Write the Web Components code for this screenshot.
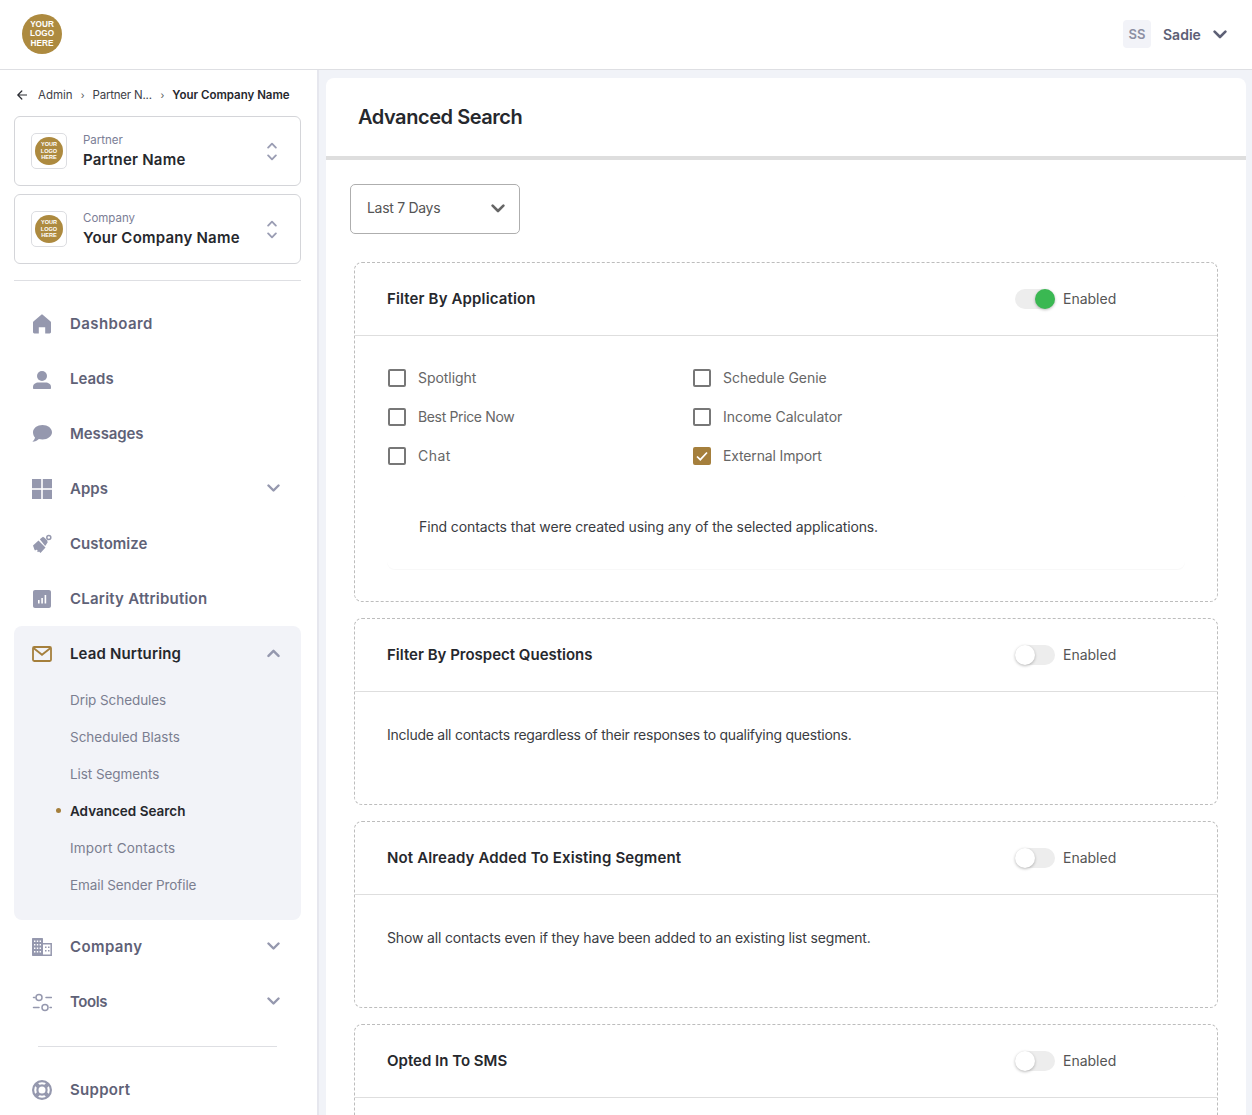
<!DOCTYPE html>
<html>
<head>
<meta charset="utf-8">
<title>Advanced Search</title>
<style>
  html, body { margin: 0; height: 100%; overflow: hidden; }
  body { font-family: Inter, "Liberation Sans", sans-serif; color: #26282d; }
  app-shell { height: 1115px; }
</style>
</head>
<body>
<app-shell>
  <top-bar slot="top"></top-bar>
  <side-nav slot="side"></side-nav>
  <search-page slot="main"></search-page>
</app-shell>

<script>
(function() {
  const CHEVRON_DOWN = '<svg width="14" height="9" viewBox="0 0 14 9" fill="none"><path d="M1.6 1.6 7 7l5.4-5.4" stroke="currentColor" stroke-width="2.6" stroke-linecap="round" stroke-linejoin="round"/></svg>';
  const CHEVRON_UP = '<svg width="14" height="9" viewBox="0 0 14 9" fill="none"><path d="M1.6 7.4 7 2l5.4 5.4" stroke="currentColor" stroke-width="2.6" stroke-linecap="round" stroke-linejoin="round"/></svg>';

  const ICONS = {
    home: '<path d="M10 .6c.4 0 .7.1 1 .4l7.6 6.4c.3.3.4.6.4 1V18c0 .8-.6 1.4-1.4 1.4h-4.4v-6.2H6.8v6.2H2.4C1.6 19.4 1 18.8 1 18V8.4c0-.4.1-.7.4-1L9 1c.3-.3.6-.4 1-.4z" fill="currentColor"/>',
    person: '<circle cx="10" cy="7" r="5" fill="currentColor"/><path d="M1 18c0-2.800 2.600-4.500 5.500-4.500h7c2.900 0 5.500 1.700 5.500 4.500v1c0 .6-.4 1-1 1H2c-.6 0-1-.4-1-1z" fill="currentColor"/>',
    chat: '<path d="M10.500 1C15.700 1 20 4.200 20 8.200s-4.300 7.200-9.500 7.200c-1.300 0-2.500-.2-3.600-.5C5.400 16.500 3 17.500.4 17.700c1.300-1.100 2.300-2.500 2.600-4.200C1.800 12.200 1 10.300 1 8.200 1 4.200 5.300 1 10.500 1z" fill="currentColor"/>',
    apps: '<rect width="9.200" height="9.200" fill="currentColor"/><rect x="10.800" width="9.200" height="9.200" fill="currentColor"/><rect y="10.800" width="9.200" height="9.200" fill="currentColor"/><rect x="10.800" y="10.800" width="9.200" height="9.200" fill="currentColor"/>',
    brush: '<path d="M1 11.500 6.500 6.500l7 7-5 5.500-1.500-1.500-1 .8-.8-1 .4-1.300-1.200-.3-1.400.7-.6-1z" fill="currentColor"/><path d="M7.800 5.200 11 2.800l1.800 1.200 2.200 2.200.7 2-2.500 3.800z" fill="currentColor"/><circle cx="16.800" cy="3.400" r="2" fill="none" stroke="currentColor" stroke-width="1.500"/>',
    chart: '<path d="M3 1h14c1.100 0 2 .9 2 2v14c0 1.100-.9 2-2 2H3c-1.100 0-2-.9-2-2V3c0-1.100.9-2 2-2z" fill="currentColor"/><path d="M6 11h1.600v3.600H6zM9.300 9h1.600v5.600H9.300zM12.600 6h1.600v8.600h-1.600z" fill="#fff"/>',
    mail: '<rect x="1" y="3" width="18" height="14" rx="1.200" fill="none" stroke="currentColor" stroke-width="1.800"/><path d="m1.800 4.300 8.200 6.500 8.200-6.500" fill="none" stroke="currentColor" stroke-width="1.800"/>',
    building: '<path d="M1 1h9c.6 0 1 .4 1 1v17H1c-.6 0-1-.4-1-1V2c0-.6.4-1 1-1z" fill="currentColor"/><g fill="#fff"><path d="M2 3.500h1.400v1.400H2zM4.800 3.500h1.400v1.400H4.800zM7.600 3.500H9v1.400H7.600zM2 7h1.400v1.400H2zM4.800 7h1.400v1.400H4.800zM7.600 7H9v1.400H7.600zM2 10.500h1.400v1.400H2zM4.800 10.500h1.400v1.400H4.800zM7.600 10.500H9v1.400H7.600zM2 14h1.400v1.400H2zM4.800 14h1.400v1.400H4.800zM7.600 14H9v1.400H7.600z"/></g><path d="M11 6.700h8.200v11.500H11" fill="none" stroke="currentColor" stroke-width="1.500"/><path d="M13 9.500h1.500V11H13zM16 9.500h1.500V11H16zM13 13h1.500v1.500H13zM16 13h1.500v1.500H16z" fill="currentColor"/>',
    sliders: '<g fill="none" stroke="currentColor" stroke-width="1.500" stroke-linecap="round"><circle cx="7" cy="5.500" r="3"/><circle cx="13" cy="15.500" r="3"/><path d="M1.500 5.500h1.500M14 5.500h5.500M1.500 15.500H7M18 15.500h1.500"/></g>',
    support: '<g fill="none" stroke="currentColor"><circle cx="10" cy="10" r="8.900" stroke-width="2.200"/><circle cx="10" cy="10" r="4.600" stroke-width="2.200"/><path d="m3.500 3.500 3.500 3.500M16.500 3.500 13 7M3.500 16.500 7 13M16.500 16.500 13 13" stroke-width="4"/></g>'
  };

  function define(name, css, html, setup) {
    const template = document.createElement('template');
    template.innerHTML = `<style>${css}</style>${html}`;
    customElements.define(name, class extends HTMLElement {
      constructor() {
        super();
        this.attachShadow({ mode: 'open' });
        this.shadowRoot.appendChild(template.content.cloneNode(true));
      }
      connectedCallback() {
        if (setup) setup(this, this.shadowRoot);
      }
    });
  }

  define('app-shell', `
    :host { display: grid; grid-template-columns: 319px 1fr; grid-template-rows: 70px 1fr; overflow: hidden; background: #f1f3f8; }
    .top { grid-column: 1 / 3; }
    .side, .main { min-height: 0; overflow: hidden; }
  `, `
    <div class="top"><slot name="top"></slot></div>
    <div class="side"><slot name="side"></slot></div>
    <div class="main"><slot name="main"></slot></div>
  `);

  define('brand-logo', `
    :host { display: flex; align-items: center; justify-content: center; border-radius: 50%; background: #ad8a3f; color: #fff;
      width: var(--size, 40px); height: var(--size, 40px); font: 700 var(--fs, 8.2px)/var(--lh, 9.5px) "Liberation Sans", sans-serif; text-align: center; }
  `, `<span>YOUR<br>LOGO<br>HERE</span>`);

  define('top-bar', `
    :host { display: flex; align-items: center; height: 68px; background: #fff; border-bottom: 1px solid #dedfe3; padding: 0 25px 1px 22px; }
    .user { margin-left: auto; display: flex; align-items: center; }
    .initials { width: 28px; height: 28px; border-radius: 4px; background: #f2f3f8; color: #8c8fa3; font-size: 13px; font-weight: 600; display: flex; align-items: center; justify-content: center; }
    .name { margin: 0 13px 0 12px; width: 37px; font-size: 14px; font-weight: 600; color: #5d6075; }
    svg { display: block; color: #5d6075; }
  `, `
    <brand-logo></brand-logo>
    <div class="user"><span class="initials">SS</span><span class="name">Sadie</span>${CHEVRON_DOWN}</div>
  `);

  define('bread-crumb', `
    :host { display: flex; align-items: center; height: 22px; font-size: 11.5px; color: #3f4148; padding-left: 3px; white-space: nowrap; }
    svg.back { margin-right: 11px; display: block; }
    .sep { margin: 0 8px; color: #555; font-size: 10px; }
    .clip { width: 60px; letter-spacing: -.2px; }
    b { font-weight: 600; color: #26282d; }
  `, `
    <svg class="back" width="10" height="10" viewBox="0 0 10 10" fill="none" stroke="#2b2d33" stroke-width="1.2" stroke-linecap="round" stroke-linejoin="round"><path d="M9.500 5H.8M4.800 1 .8 5l4 4"/></svg>
    <span>Admin</span><span class="sep">›</span><span class="clip">Partner N...</span><span class="sep">›</span><b>Your Company Name</b>
  `);

  define('account-card', `
    :host { display: flex; align-items: center; height: 68px; border: 1px solid #d4d5d9; border-radius: 6px; padding: 0 23px 0 16px; background: #fff; }
    .logo { width: 34px; height: 34px; border: 1px solid #dcdde1; border-radius: 5px; display: flex; align-items: center; justify-content: center; --size: 28px; --fs: 5.6px; --lh: 6.7px; }
    .text { margin-left: 16px; flex: 1; padding-top: 1px; }
    .label { font-size: 11.5px; line-height: 16px; color: #7b7e96; }
    .name { font-size: 15px; line-height: 22px; margin-top: 1px; font-weight: 600; color: #26282d; letter-spacing: .22px; }
    .arrows { display: flex; flex-direction: column; gap: 5px; color: #9a9db3; }
    .arrows svg { display: block; width: 10px; height: 7px; }
  `, `
    <span class="logo"><brand-logo></brand-logo></span>
    <div class="text"><div class="label"></div><div class="name"></div></div>
    <div class="arrows">${CHEVRON_UP}${CHEVRON_DOWN}</div>
  `, (el, root) => {
    root.querySelector('.label').textContent = el.getAttribute('label');
    root.querySelector('.name').textContent = el.getAttribute('name');
  });

  define('nav-item', `
    :host { display: flex; align-items: center; height: 55px; padding: 0 21px 0 18px; font-size: 15px; font-weight: 600; color: #5f6277; }
    :host([active]) { color: #26282d; }
    .icon { width: 20px; height: 20px; margin-right: 18px; color: #9598ae; flex: none; display: block; }
    :host([active]) .icon { color: #a57f3c; }
    .label { flex: 1; }
    .arrow { color: #9598ae; display: none; }
    .arrow svg { display: block; width: 13px; height: 8.4px; }
  `, `
    <svg class="icon" viewBox="0 0 20 20"></svg><span class="label"><slot></slot></span><span class="arrow"></span>
  `, (el, root) => {
    root.querySelector('.icon').innerHTML = ICONS[el.getAttribute('icon')];
    const arrow = el.getAttribute('arrow');
    if (arrow) {
      const box = root.querySelector('.arrow');
      box.style.display = 'block';
      box.innerHTML = arrow === 'up' ? CHEVRON_UP : CHEVRON_DOWN;
    }
  });

  define('sub-item', `
    :host { display: flex; align-items: center; height: 37px; padding-left: 56px; font-size: 13.5px; color: #7b7e90; position: relative; }
    :host([current]) { color: #26282d; font-weight: 600; }
    :host([current])::before { content: ""; position: absolute; left: 42px; top: 16px; width: 5px; height: 5px; border-radius: 50%; background: #a57f3c; }
  `, `<slot></slot>`);

  define('side-nav', `
    :host { display: block; height: 100%; background: #fff; border-right: 2px solid #e6e7ee; box-sizing: border-box; padding: 14px 16px 0 14px; }
    account-card { margin-top: 8px; }
    account-card.first { margin-top: 10px; }
    .rule { height: 1px; background: #dedfe3; margin: 16px 0 15px; }
    .group { background: #f2f3f8; border-radius: 8px; padding-bottom: 17px; margin-bottom: -1px; }
    .rule2 { height: 1px; background: #dedfe3; margin: 17px 24px 15px; }
  `, `
    <bread-crumb></bread-crumb>
    <account-card class="first" label="Partner" name="Partner Name"></account-card>
    <account-card label="Company" name="Your Company Name"></account-card>
    <div class="rule"></div>
    <nav-item icon="home" style="letter-spacing:.42px">Dashboard</nav-item>
    <nav-item icon="person">Leads</nav-item>
    <nav-item icon="chat" style="letter-spacing:-.1px">Messages</nav-item>
    <nav-item icon="apps" arrow="down">Apps</nav-item>
    <nav-item icon="brush">Customize</nav-item>
    <nav-item icon="chart" style="letter-spacing:.22px">CLarity Attribution</nav-item>
    <div class="group">
      <nav-item icon="mail" arrow="up" active style="letter-spacing:.14px">Lead Nurturing</nav-item>
      <sub-item style="letter-spacing:-.07px">Drip Schedules</sub-item>
      <sub-item>Scheduled Blasts</sub-item>
      <sub-item style="letter-spacing:-.07px">List Segments</sub-item>
      <sub-item current>Advanced Search</sub-item>
      <sub-item style="letter-spacing:.2px">Import Contacts</sub-item>
      <sub-item style="letter-spacing:-.1px">Email Sender Profile</sub-item>
    </div>
    <nav-item icon="building" arrow="down" style="letter-spacing:.4px">Company</nav-item>
    <nav-item icon="sliders" arrow="down" style="letter-spacing:-.4px">Tools</nav-item>
    <div class="rule2"></div>
    <nav-item icon="support" style="letter-spacing:.28px">Support</nav-item>
  `);

  define('toggle-switch', `
    :host { display: flex; align-items: center; font-size: 14px; color: #555; }
    .track { width: 40px; height: 20px; border-radius: 10px; background: #ededed; position: relative; margin-right: 8px; }
    .knob { position: absolute; left: 0; top: 0; width: 20px; height: 20px; border-radius: 50%; background: #fff; box-shadow: 0 1px 3px rgba(0,0,0,.28); }
    :host([on]) .knob { left: 20px; background: #3ab852; }
    .text { margin-bottom: 1px; }
  `, `<span class="track"><span class="knob"></span></span><span class="text">Enabled</span>`);

  define('filter-panel', `
    :host { display: block; border: 1px dashed #bdbdbd; border-radius: 8px; margin: 0 28px 16px; background: #fff; }
    .head { display: grid; grid-template-columns: 628px 1fr; align-items: center; height: 72px; padding-left: 32px; border-bottom: 1px solid #dedede; }
    .title { font-size: 15px; font-weight: 600; color: #26282d; padding-bottom: 1px; }
  `, `
    <div class="head"><span class="title"></span><toggle-switch></toggle-switch></div>
    <slot></slot>
  `, (el, root) => {
    const title = root.querySelector('.title');
    title.textContent = el.getAttribute('heading');
    title.style.letterSpacing = el.getAttribute('track') || '0';
    if (el.hasAttribute('on')) root.querySelector('toggle-switch').setAttribute('on', '');
  });

  define('check-box', `
    :host { display: flex; align-items: center; height: 39px; font-size: 14px; color: #666; letter-spacing: -.04px; }
    .box { width: 18px; height: 18px; box-sizing: border-box; border: 2px solid #777; border-radius: 2px; margin: 0 12px 0 1px; display: block; flex: none; }
    :host([checked]) .box { background: #a57f3c; border-color: #a57f3c; }
    svg { display: none; }
    :host([checked]) svg { display: block; }
  `, `<span class="box"><svg width="14" height="14" viewBox="0 0 14 14" fill="none"><path d="m2 7.500 3.300 3.200L12 3.500" stroke="#fff" stroke-width="1.700"/></svg></span><slot></slot>`);

  define('panel-note', `
    :host { display: block; padding: 33px 32px 59px; font-size: 14px; line-height: 20px; color: #3a3c42; }
  `, `<slot></slot>`);

  define('app-filter', `
    :host { display: block; padding: 22px 32px 32px; }
    .grid { display: grid; grid-template-columns: 305px 1fr; }
    .note { margin-top: 15px; height: 52px; padding: 27px 32px 0; border-radius: 8px; font-size: 14px; line-height: 20px; color: #3a3c42; letter-spacing: -.12px; box-shadow: 0 1px 1px rgba(0,0,0,.03); }
  `, `
    <div class="grid">
      <check-box>Spotlight</check-box><check-box>Schedule Genie</check-box>
      <check-box style="letter-spacing:-.36px">Best Price Now</check-box><check-box>Income Calculator</check-box>
      <check-box style="letter-spacing:.5px">Chat</check-box><check-box checked style="letter-spacing:-.15px">External Import</check-box>
    </div>
    <div class="note">Find contacts that were created using any of the selected applications.</div>
  `);

  define('date-select', `
    :host { display: flex; align-items: center; justify-content: space-between; box-sizing: border-box; width: 170px; height: 50px; margin: 24px 0 28px 24px; padding: 0 14px 2px 16px; border: 1px solid #aeaeae; border-radius: 5px; font-size: 14px; color: #555; letter-spacing: -.3px; }
    span { margin-bottom: 2px; }
    svg { display: block; color: #666; }
  `, `<span>Last 7 Days</span>${CHEVRON_DOWN}`);

  define('search-page', `
    :host { display: block; margin: 8px 6px 0 7px; background: #fff; border-radius: 8px 8px 0 0; height: 1037px; overflow: hidden; }
    h1 { margin: 0; height: 78px; display: flex; align-items: center; padding-left: 32px; border-bottom: 4px solid #dedede; font-size: 20px; font-weight: 600; color: #26282d; letter-spacing: -.45px; }
  `, `
    <h1>Advanced Search</h1>
    <date-select></date-select>
    <filter-panel heading="Filter By Application" on track=".14px"><app-filter></app-filter></filter-panel>
    <filter-panel heading="Filter By Prospect Questions"><panel-note style="letter-spacing:-.25px">Include all contacts regardless of their responses to qualifying questions.</panel-note></filter-panel>
    <filter-panel heading="Not Already Added To Existing Segment" track=".14px"><panel-note style="letter-spacing:-.16px">Show all contacts even if they have been added to an existing list segment.</panel-note></filter-panel>
    <filter-panel heading="Opted In To SMS"><panel-note></panel-note></filter-panel>
  `);
})();
</script>
</body>
</html>
